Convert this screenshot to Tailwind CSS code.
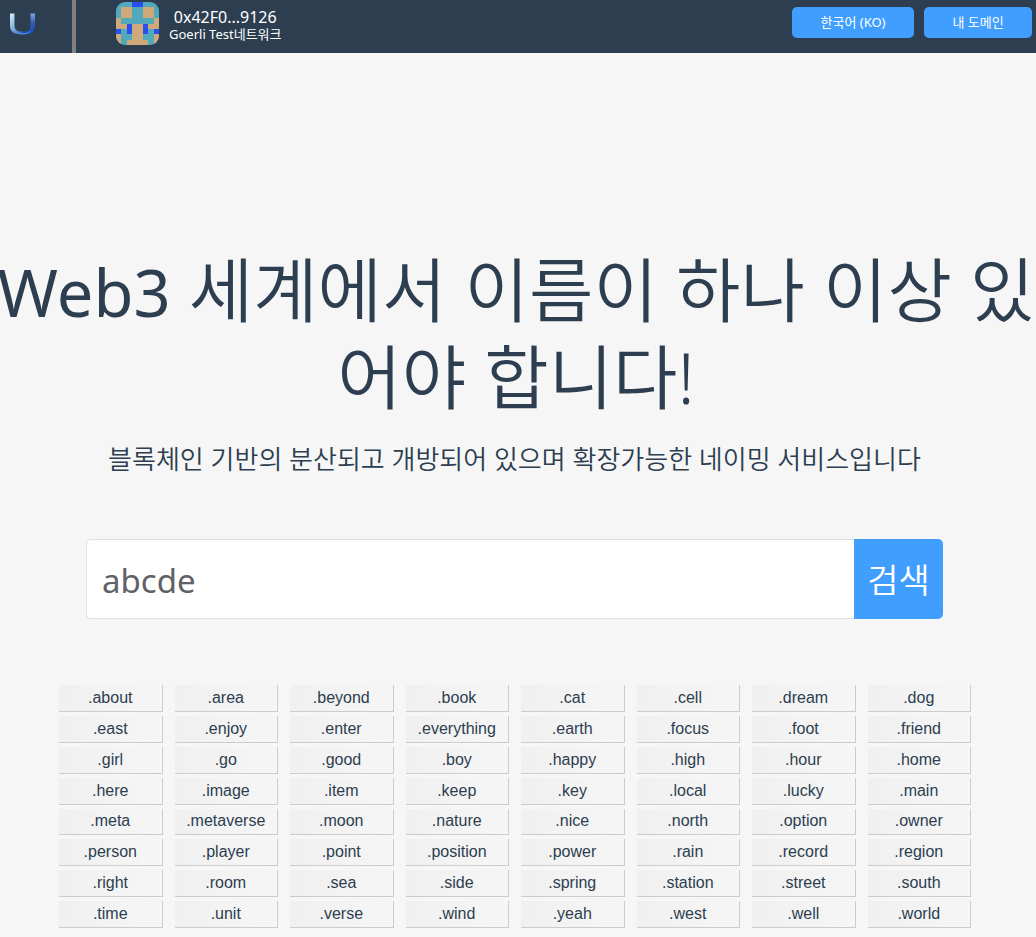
<!DOCTYPE html>
<html lang="ko">
<head>
<meta charset="utf-8">
<meta name="viewport" content="width=device-width, initial-scale=1">
<title>Web3 네이밍 서비스</title>
<script src="https://cdn.jsdelivr.net/npm/@tailwindcss/browser@4"></script>
</head>
<body class="min-h-screen overflow-x-hidden bg-[#f6f6f6] text-[#2c3e50] font-['Noto_Sans','Noto_Sans_CJK_KR',sans-serif]">
<header class="flex h-[53px] items-stretch bg-[#2c3e50] text-white">
  <a href="#" aria-label="홈" class="flex w-[76px] shrink-0 items-start border-r-4 border-[#808080] pt-3 pl-[9px]">
    <svg class="h-[24px] w-[28px]" viewBox="0 0 28 24" fill="none">
      <defs>
        <linearGradient id="u" x1="0" y1="0" x2="26" y2="20" gradientUnits="userSpaceOnUse"><stop stop-color="#e4ffff"/><stop offset=".4" stop-color="#7fb0e0"/><stop offset=".75" stop-color="#2459bd"/><stop offset="1" stop-color="#3a7be0"/></linearGradient>
        <linearGradient id="v" x1="0" y1="0" x2="0" y2="22" gradientUnits="userSpaceOnUse"><stop stop-color="#8db6e4"/><stop offset=".5" stop-color="#2c5cb4"/><stop offset="1" stop-color="#1c4cb8"/></linearGradient>
      </defs>
      <path d="M1 1.500H5.500V13C5.500 18 8 19.500 14 19.500V22.500C5 22.500 1 20 1 13Z" fill="url(#u)"/>
      <path d="M26 1.500H21.500V13C21.500 18 20 19.500 14 19.500V22.500C22 22.500 26 20 26 13Z" fill="url(#v)"/>
      <path d="M6 19.500Q9 22 14 22T21 19.500" stroke="#5c91d8" stroke-width="1"/>
    </svg>
  </a>
  <div class="ml-10 flex items-start gap-2.5">
    <svg class="mt-0.5 h-[43px] w-[43px] rounded-[9px]" viewBox="0 0 8 8" shape-rendering="crispEdges" aria-hidden="true">
      <path fill="#52a9bb" d="M0 0h8v8H0z"/>
      <path fill="#cfa979" d="M1 1h2v2H1zM5 1h2v2H5zM0 3h1v2H0zM7 3h1v2H7zM1 4h6v1H1zM3 5h2v3H3zM0 6h1v2H0zM7 6h1v2H7zM2 7h4v1H2z"/>
      <path fill="#2850f0" d="M3 0h2v1H3zM2 4h1v2H2zM5 4h1v2H5zM0 5h1v1H0zM7 5h1v1H7z"/>
    </svg>
    <div class="pt-2 text-center">
      <p class="text-base leading-[18px]">0x42F0...9126</p>
      <p class="text-[13px] leading-4">Goerli Test네트워크</p>
    </div>
  </div>
  <div class="mt-[7px] mr-1 ml-auto flex items-start gap-2.5 text-[13px] leading-[31px]">
    <button type="button" class="h-[31px] w-[122px] rounded-[5px] bg-[#409eff]">한국어 (KO)</button>
    <button type="button" class="h-[31px] w-[108px] rounded-[5px] bg-[#409eff]">내 도메인</button>
  </div>
</header>
<main>
  <h1 class="-ml-5 -mr-4 mt-[194px] text-center text-[70px] leading-[87px] font-[350] whitespace-nowrap"><span class="text-[65px] leading-none font-normal">Web3</span> 세계에서 이름이 하나 이상 있<br>어야 합니다!</h1>
  <div class="mr-[7px]">
    <p class="mt-[18px] text-center text-[26px] leading-10 font-[350]">블록체인 기반의 분산되고 개방되어 있으며 확장가능한 네이밍 서비스입니다</p>
    <form class="mx-[86px] mt-[60px] flex h-20" onsubmit="return false">
      <input type="text" aria-label="이름 검색" value="abcde" class="min-w-0 flex-1 rounded-l-[5px] border border-r-0 border-[#dcdfe6] bg-white px-[15px] pt-1 text-[33px] text-[#606266] outline-none">
      <button type="submit" class="w-[89px] rounded-r-[5px] bg-[#409eff] pt-0.5 text-[34px] leading-none font-[350] text-white">검색</button>
    </form>
    <div id="names" class="mr-[58px] ml-[59px] mt-[66px] mb-2 grid h-[243px] auto-rows-fr grid-cols-8 gap-x-3 gap-y-1 font-['Liberation_Sans',Arial,sans-serif] text-base"></div>
  </div>
</main>
<script>
const names = `about area beyond book cat cell dream dog
east enjoy enter everything earth focus foot friend
girl go good boy happy high hour home
here image item keep key local lucky main
meta metaverse moon nature nice north option owner
person player point position power rain record region
right room sea side spring station street south
time unit verse wind yeah west well world`.split(/\s+/);
const grid = document.getElementById('names');
for (const name of names) {
  const b = document.createElement('button');
  b.type = 'button';
  b.className = 'flex min-h-0 min-w-0 items-center justify-center border-r border-b border-[#ccc] bg-linear-to-r from-[#f0f0f0] to-[#f6f6f6] leading-6';
  b.textContent = '.' + name;
  grid.append(b);
}
</script>
</body>
</html>
